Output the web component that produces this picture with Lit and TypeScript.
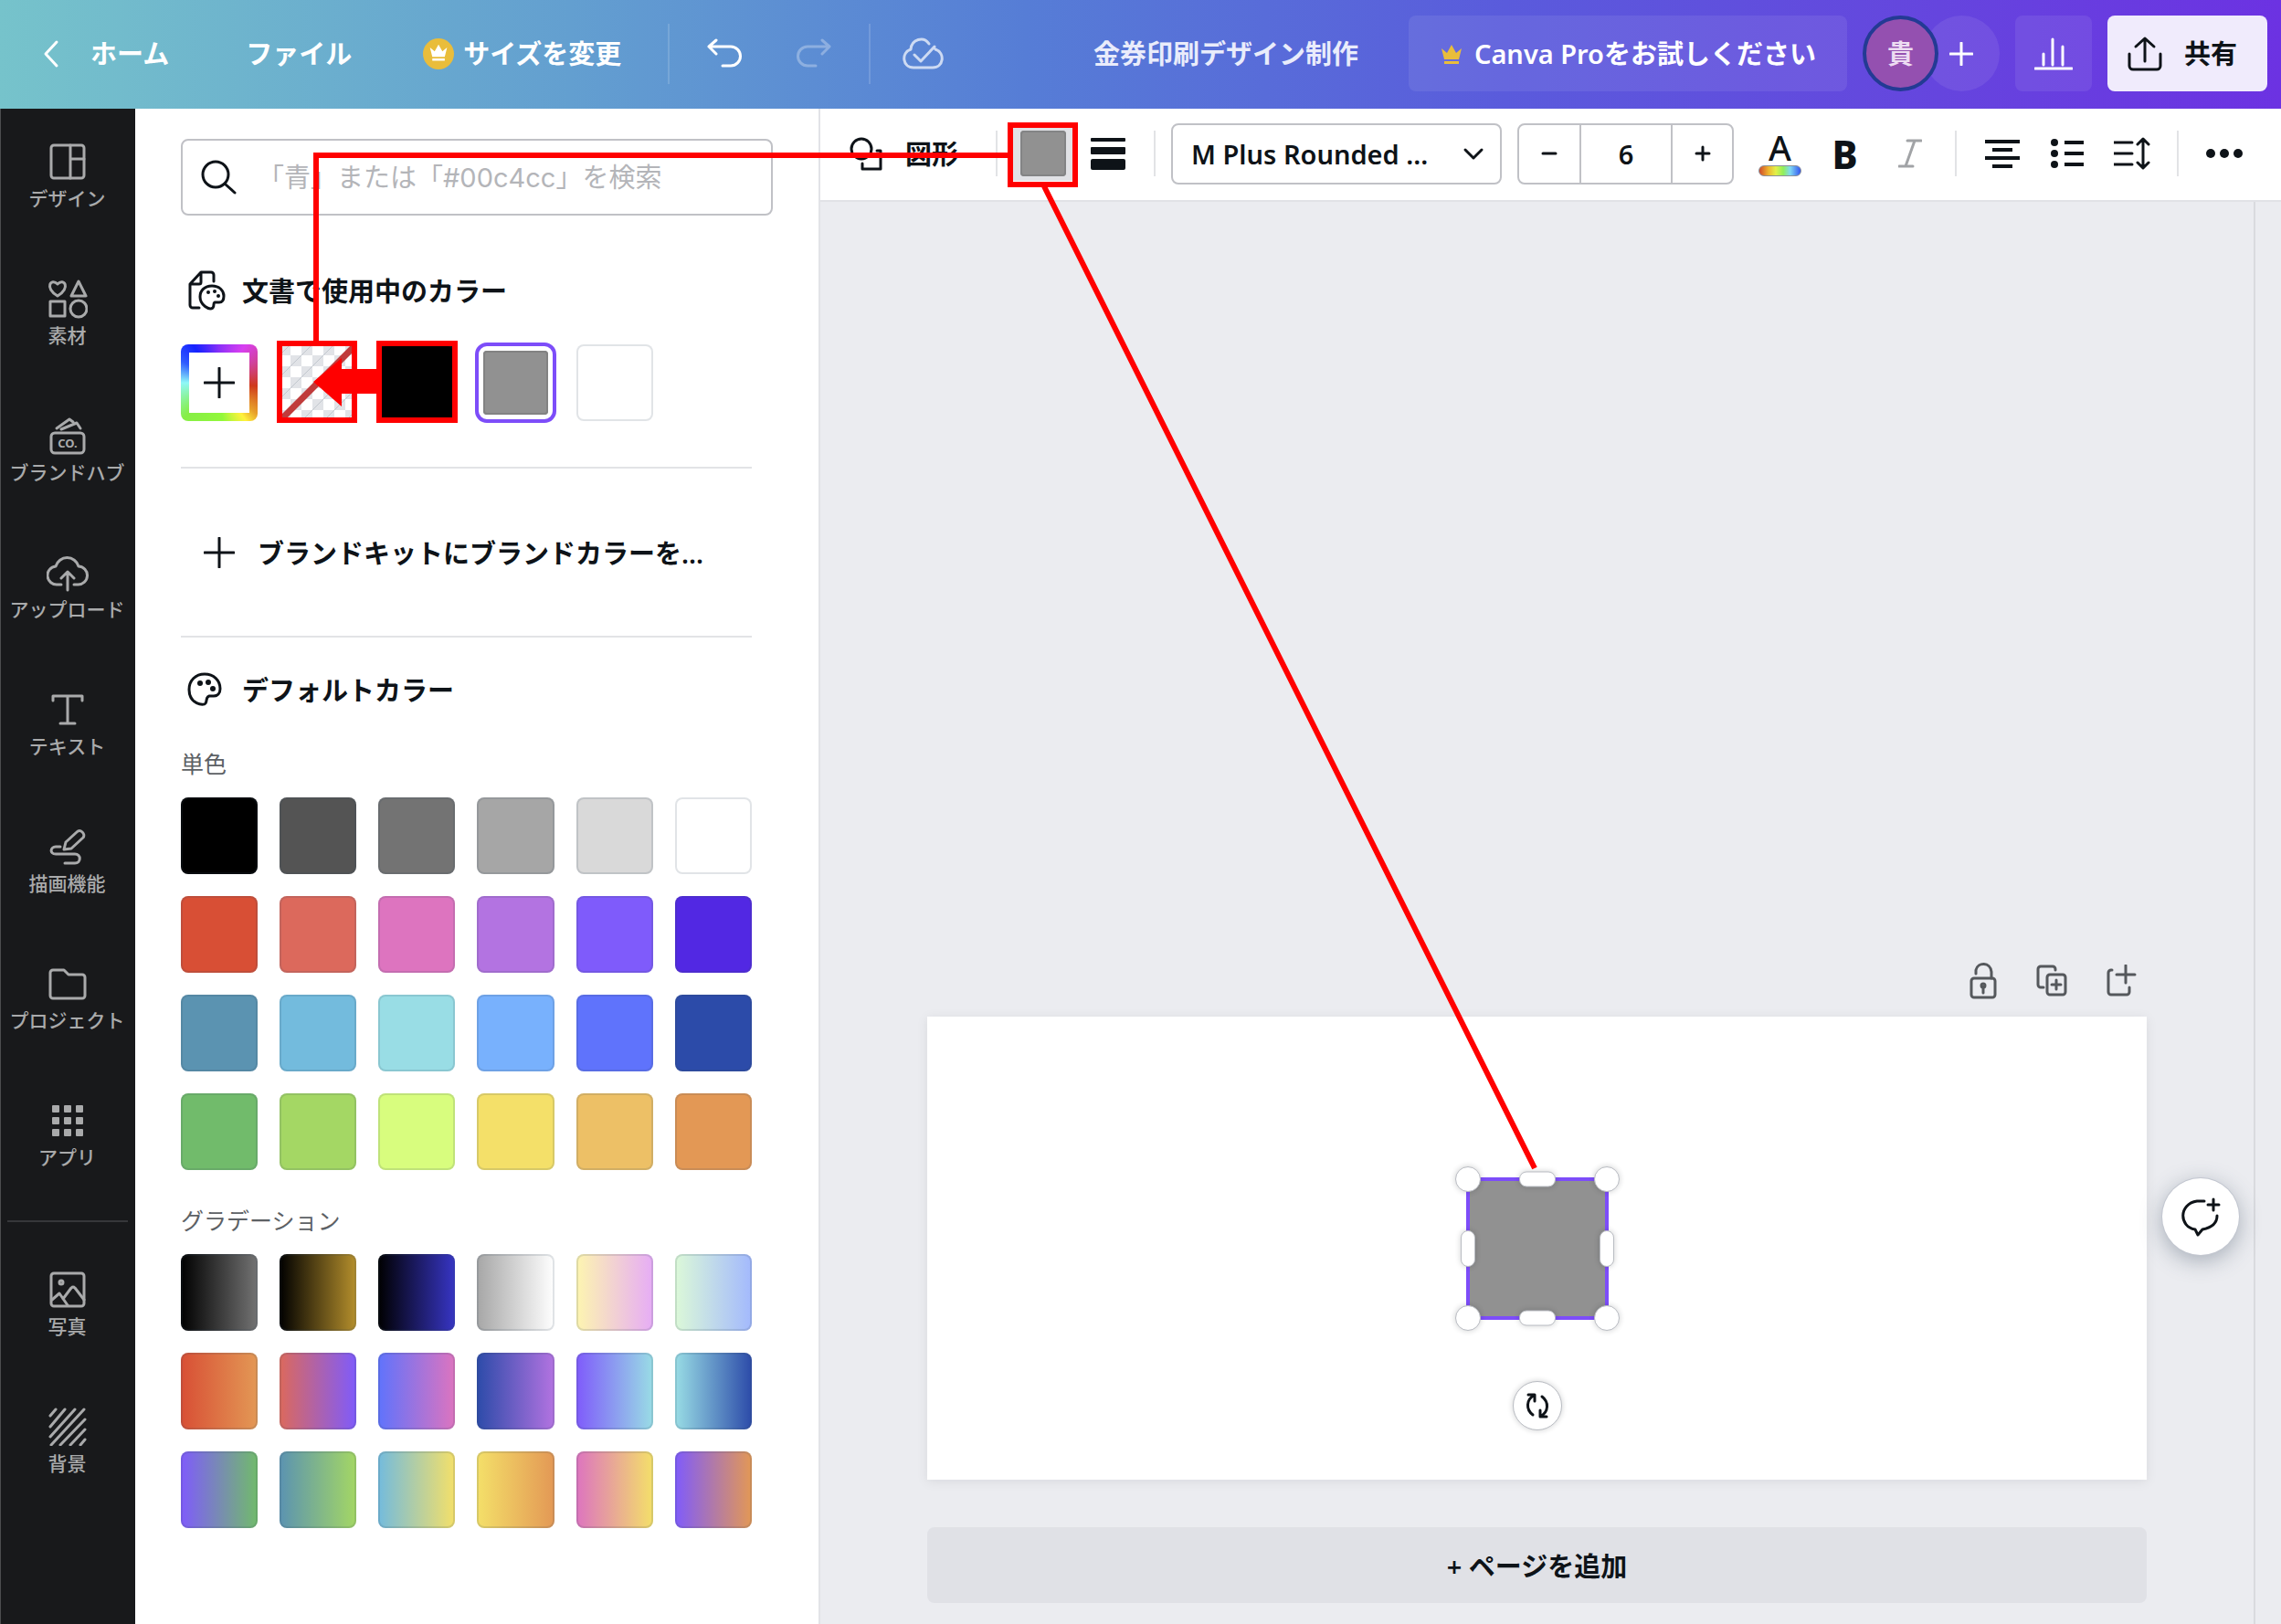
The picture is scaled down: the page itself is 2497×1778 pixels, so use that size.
import { LitElement, html, svg, css, TemplateResult, SVGTemplateResult } from "lit";
import { customElement, state } from "lit/decorators.js";
import { styleMap } from "lit/directives/style-map.js";

const icon = (w: number, h: number, body: SVGTemplateResult, cls = ""): TemplateResult => html`
  <svg class="icon ${cls}" width=${w} height=${h} viewBox="0 0 ${w} ${h}" aria-hidden="true">${body}</svg>`;

const crownPath = "M2 6 L8 11 L13 2 L18 11 L24 6 L21 18 H5 Z M5 20 H21 V23 H5 Z";

const icons = {
  back: icon(20, 32, svg`<path d="M16 3 L4 16 L16 29"/>`),
  crownBadge: icon(34, 34, svg`<circle cx="17" cy="17" r="17" fill="#e9bd3b" stroke="none"/>
    <path transform="translate(6 5) scale(.85)" d=${crownPath} fill="#fff" stroke="none"/>`),
  crown: icon(26, 24, svg`<path d=${crownPath} fill="#e9bd3b" stroke="none"/>`),
  undo: icon(38, 36, svg`<path d="M10 3 L2 10 L10 18 M2 10 H26 a10 10 0 0 1 0 21 H17"/>`),
  redo: icon(38, 36, svg`<path d="M28 3 L36 10 L28 18 M36 10 H12 a10 10 0 0 0 0 21 H21"/>`),
  cloudDone: icon(46, 38, svg`<path d="M29 8 c-6 -9 -19 -5 -20 6 c-11 4 -9 20 3 20 H33 c12 0 14 -16 3 -20 M13 20 L20 27 L35 11"/>`),
  chart: icon(42, 38, svg`<path d="M1 35 H41 M10 31 V19 M20 31 V3 M31 31 V11"/>`),
  share: icon(38, 40, svg`<path d="M2 20 V33 a4 4 0 0 0 4 4 H32 a4 4 0 0 0 4 -4 V20 M19 28 V3 M9 12 L19 3 L29 12"/>`),
  plus: icon(26, 26, svg`<path d="M13 1 V25 M1 13 H25"/>`),
  plusLarge: icon(34, 34, svg`<path d="M17 1 V33 M1 17 H33"/>`),
  search: icon(40, 40, svg`<circle cx="16" cy="17" r="14"/><path d="M27 28 L37 37"/>`),
  docPalette: icon(42, 44, svg`<path d="M29 12 V5 a3 3 0 0 0 -3 -3 H15 L3 15 V38 a3 3 0 0 0 3 3 H13 M15 2 V13 a2 2 0 0 1 -2 2 H3"/>
    <path d="M27 17 c8 0 13 5 13 11 c0 5 -2 7 -5 7 h-5 c-2 1 0 3 -2 6 c-4 3 -14 -3 -14 -12 c0 -7 5 -12 13 -12 Z"/>
    <g class="dots"><circle cx="23" cy="24" r="2"/><circle cx="30" cy="23" r="2"/><circle cx="34" cy="28" r="2"/></g>`),
  palette: icon(42, 40, svg`<path d="M19 3 c10 0 17 7 17 16 c0 5 -3 8 -7 8 h-5 c-4 1 -2 5 -4 8 c-2 3 -18 1 -18 -15 c0 -10 7 -17 17 -17 Z"/>
    <g class="dots"><circle cx="14" cy="13" r="3"/><circle cx="23" cy="12" r="3"/><circle cx="28" cy="19" r="3"/></g>`),
  shapes: icon(36, 38, svg`<circle cx="13" cy="14" r="11"/><path d="M30 16 H34 V36 H14 V30"/>`),
  lines: icon(38, 36, svg`<g class="solid"><rect y="1" width="38" height="4" rx="1"/><rect y="11" width="38" height="8" rx="1"/><rect y="24" width="38" height="12" rx="2"/></g>`),
  italic: icon(26, 32, svg`<path d="M10 2 H25 M1 30 H16 M18 2 L8 30"/>`),
  align: icon(38, 32, svg`<path d="M0 3 H38 M8 12 H30 M0 21 H38 M8 30 H30"/>`),
  list: icon(36, 36, svg`<path d="M15 6 H36 M15 18 H36 M15 30 H36"/><g class="dots"><circle cx="4" cy="6" r="4"/><circle cx="4" cy="18" r="4"/><circle cx="4" cy="30" r="4"/></g>`),
  spacing: icon(40, 36, svg`<path d="M0 6 H20 M0 18 H20 M0 30 H20 M32 3 V33 M26 8 L32 2 L38 8 M26 28 L32 34 L38 28"/>`),
  more: icon(40, 12, svg`<g class="dots"><circle cx="5" cy="6" r="5"/><circle cx="20" cy="6" r="5"/><circle cx="35" cy="6" r="5"/></g>`),
  lock: icon(32, 42, svg`<rect x="3" y="18" width="26" height="21" rx="3"/><path d="M8 13 V9 c2 -9 16 -9 17 2 V18 M16 27 V34"/><circle cx="16" cy="26" r="2"/>`),
  duplicate: icon(34, 36, svg`<path d="M8 25 H5 a3 3 0 0 1 -3 -3 V5 a3 3 0 0 1 3 -3 H18 a3 3 0 0 1 3 3 V6"/><rect x="12" y="11" width="20" height="22" rx="3"/><path d="M22 17 V27 M17 22 H27"/>`),
  addPage: icon(34, 36, svg`<path d="M7 6 H6 a3 3 0 0 0 -3 3 V30 a3 3 0 0 0 3 3 H23 a3 3 0 0 0 3 -3 V25 M22 1 V20 M12 11 H32"/>`),
  comment: icon(46, 44, svg`<path d="M27 5 H19 C-1 8 -1 33 17 36 L20 42 L25 36 C35 34 41 30 41 21"/><path d="M37 3 V15 M31 9 H43"/>`),
  rotate: icon(28, 28, svg`<path d="M9 24 C1 18 2 7 10 3 M4 2 H11 V9 M19 4 C27 10 26 21 18 25 M24 26 H17 V19"/>`),
};

const sideIcons: Record<string, TemplateResult> = {
  design: icon(40, 40, svg`<rect x="2" y="2" width="36" height="36" rx="3"/><path d="M23 2 V38 M23 17 H38"/>`),
  elements: icon(44, 44, svg`<path d="M11 19 C-4 10 4 -1 11 6 C18 -1 26 10 11 19 Z"/><path d="M34 3 L42 19 H26 Z"/><rect x="3" y="25" width="16" height="16"/><circle cx="34" cy="33" r="9"/>`),
  brand: icon(40, 42, svg`<rect x="2" y="18" width="36" height="22" rx="4"/><path d="M8 13 L22 3 L26 6 M13 14 L30 7 L34 13"/><text x="20" y="34" text-anchor="middle" class="co">CO.</text>`),
  upload: icon(46, 42, svg`<path d="M16 34 H12 a10 10 0 0 1 -2 -20 a13 13 0 0 1 25 0 a10 10 0 0 1 -1 20 H30 M23 40 V20 M16 27 L23 20 L30 27"/>`),
  text: icon(36, 36, svg`<path d="M2 8 V3 H34 V8 M18 3 V33 M10 33 H26"/>`),
  draw: icon(40, 40, svg`<path d="M16 23 L18 15 L30 4 c4 -4 10 2 7 6 L24 22 Z M12 20 H7 c-6 0 -7 8 0 8 H28 c7 0 7 10 0 10 H17"/>`),
  folder: icon(42, 36, svg`<path d="M2 6 a3 3 0 0 1 3 -3 H17 L22 8 H37 a3 3 0 0 1 3 3 V31 a3 3 0 0 1 -3 3 H5 a3 3 0 0 1 -3 -3 Z"/>`),
  apps: icon(34, 34, svg`<g class="solid">${[0, 13, 26].map((y) => [0, 13, 26].map((x) => svg`<rect x=${x} y=${y} width="8" height="8" rx="1"/>`))}</g>`),
  photo: icon(40, 40, svg`<rect x="2" y="2" width="36" height="36" rx="3"/><path d="M3 31 L11 24 L20 37 M15 30 L24 18 a3 3 0 0 1 4 0 L38 31"/><circle cx="13" cy="12" r="2"/>`),
  background: icon(42, 42, svg`<path d="M2 9 L8 2 M2 21 L18 2 M2 32 L29 2 M3 41 L39 2 M13 41 L40 13 M24 41 L40 24 M35 41 L40 35"/>`),
};

const sideItems: [string, string][] = [
  ["design", "デザイン"], ["elements", "素材"], ["brand", "ブランドハブ"], ["upload", "アップロード"],
  ["text", "テキスト"], ["draw", "描画機能"], ["folder", "プロジェクト"], ["apps", "アプリ"],
];
const sideExtras: [string, string][] = [["photo", "写真"], ["background", "背景"]];

const solids = [
  "#000000", "#545454", "#737373", "#a6a6a6", "#d9d9d9", "#ffffff",
  "#d84f35", "#dc695c", "#dd74bf", "#b373e1", "#7f5bfb", "#5228e3",
  "#5b93b1", "#73bbdd", "#99dde5", "#78b1fd", "#5f73fc", "#2c4ba9",
  "#71bb6b", "#a4d764", "#d8fd7e", "#f4e069", "#edc066", "#e39855",
];
const gradients: [string, string][] = [
  ["#000000", "#737373"], ["#000000", "#b58f2c"], ["#000000", "#3735c4"],
  ["#a6a6a6", "#ffffff"], ["#fdf5b0", "#e6acf6"], ["#dcf9d8", "#a3b9fd"],
  ["#d84f35", "#e39855"], ["#dc695c", "#7f5bfb"], ["#5f73fc", "#dd74bf"],
  ["#2c4ba9", "#b373e1"], ["#7f5bfb", "#99dde5"], ["#99dde5", "#2c4ba9"],
  ["#7f5bfb", "#71bb6b"], ["#5b93b1", "#a4d764"], ["#73bbdd", "#f4e069"],
  ["#f4e069", "#e39855"], ["#dd74bf", "#f4e069"], ["#7f5bfb", "#e39855"],
];

@customElement("app-root")
export class AppRoot extends LitElement {
  @state() private size = "6";

  static styles = css`
    :host { display: block; font-family: "Noto Sans", "Noto Sans CJK JP", sans-serif; color: #0e1318; }
    * { box-sizing: border-box; }
    button, input, select { font: inherit; color: inherit; margin: 0; padding: 0; border: 0; background: none; }
    button { display: flex; align-items: center; justify-content: center; flex: none; cursor: pointer; white-space: nowrap; }
    h1, h2, h3 { margin: 0; font-size: inherit; font-weight: inherit; }
    .icon { display: block; flex: none; fill: none; stroke: currentColor; stroke-width: 3; stroke-linecap: round; stroke-linejoin: round; }
    .dots, .solid { fill: currentColor; stroke: none; }
    .app { position: relative; min-height: 100vh; display: flex; flex-direction: column; }

    .top { height: 119px; flex: none; display: flex; align-items: center; padding: 0 15px 2px 0; color: #fff; font-size: 29px; font-weight: 600;
      background: linear-gradient(90deg, #76c3cb 0%, #639fd0 25%, #567dd6 45%, #5a5bdc 66%, #6545de 85%, #6c32e2 100%); }
    .top button, .top a { height: 83px; }
    .top span, .title { padding-bottom: 3px; }
    .home { display: flex; align-items: center; gap: 33px; padding: 0 42px 0 46px; color: #fff; text-decoration: none; }
    .top .file { padding: 0 40px 3px 42px; }
    .top .resize { padding: 0 51px 0 38px; gap: 10px; }
    .top .history { padding: 0 30px; }
    .top .history.first { padding-left: 41px; }
    .top .history.last { padding-right: 41px; color: rgba(255, 255, 255, .3); }
    .rule { width: 2px; height: 66px; flex: none; background: rgba(255, 255, 255, .15); }
    .top .cloud { padding-left: 35px; color: rgba(255, 255, 255, .7); }
    .right { display: flex; align-items: center; gap: 17px; margin-left: auto; }
    .title { color: #e9ecfb; margin-right: 38px; white-space: nowrap; }
    .top .tint { background: rgba(255, 255, 255, .08); border-radius: 8px; }
    .top .pro { padding: 0 34px; gap: 12px; }
    .people { display: flex; }
    .top .avatar { width: 83px; border-radius: 50%; border: 4px solid #233a94; background: #9450b0; color: #eddcf2; z-index: 1; padding-bottom: 3px; }
    .top .invite { width: 83px; margin-left: -16px; border-radius: 50%; }
    .top .chart { width: 84px; }
    .top .share { padding: 0 33px 0 22px; gap: 24px; border-radius: 8px; background: #f0ebfc; color: #0e1318; }

    .body { flex: 1; display: flex; align-items: stretch; }
    .side { width: 148px; flex: none; background: #18191b; color: #a9aaab; box-shadow: inset 1px 0 #4c4d4f; padding-right: 1px; font-size: 21px; font-weight: 500; }
    .side button { width: 100%; height: 150px; flex-direction: column; gap: 2px; }
    .side .pic { height: 44px; display: flex; align-items: center; }
    .side .label { line-height: 32px; }
    .side hr { height: 2px; margin: 17px 7px 16px 8px; border: 0; background: #36373a; }
    .co { font: 700 13px "Noto Sans", sans-serif; fill: currentColor; stroke: none; }

    .panel { width: 750px; flex: none; padding: 33px 50px 0; background: #fff; border-right: 2px solid #e2e3e7; }
    .search { height: 84px; display: flex; align-items: center; gap: 22px; padding: 0 20px; border: 2px solid #c0c1c6; border-radius: 8px; }
    .search input { flex: 1; min-width: 0; height: 100%; font-family: Inter, "Noto Sans CJK JP", sans-serif; font-size: 29px; outline: 0; }
    .search input::placeholder { color: #b4b5b9; opacity: 1; }
    .content { padding-right: 23px; }
    .heading { display: flex; align-items: center; gap: 18px; height: 44px; padding-left: 7px; font-size: 29px; font-weight: 600; }
    .heading span, .brandkit span { padding-bottom: 2px; }
    .heading.doc { margin: 60px 0 37px; }
    .heading.default { margin: 35px 0 41px; }
    .grid { display: grid; grid-template-columns: repeat(6, 1fr); gap: 24px; }
    .swatch { height: 84px; border-radius: 8px; box-shadow: inset 0 0 0 2px rgba(57, 76, 96, .15); overflow: hidden; }
    .grid .custom { background: conic-gradient(#8a30f8 0deg, #d83ff0 35deg, #d0429a 60deg, #cf3a1c 95deg, #e8a02c 130deg, #fff23c 145deg, #92f83a 175deg, #86ee45 225deg, #8ff8f8 270deg, #2f5cff 300deg, #1522ff 325deg, #8a30f8 360deg); padding: 9px; box-shadow: none; }
    .custom span { flex: 1; height: 100%; display: flex; align-items: center; justify-content: center; background: #fff; }
    .selected { background: #919191; box-shadow: inset 0 0 0 2px #828282; border-radius: 4px; margin: 7px; height: 70px; outline: 4px solid #7d4df9; outline-offset: 5px; }
    .content hr { height: 2px; margin: 0; border: 0; background: #e2e3e6; }
    .content .after { margin-top: 50px; }
    .brandkit { width: 100%; height: 183px; justify-content: flex-start; padding-left: 25px; gap: 25px; font-size: 29px; font-weight: 600; }
    .sub { font-size: 25px; line-height: 36px; color: #5d6165; margin: 0 0 19px; }
    .grid + .sub { margin-top: 37px; }

    .main { flex: 1; min-width: 0; display: flex; flex-direction: column; background: #ebecf0; }
    .tools { height: 102px; flex: none; display: flex; align-items: center; padding: 0 26px 2px 32px; background: #fff; border-bottom: 2px solid #e1e2e6; }
    .shape { gap: 25px; margin-right: 41px; font-size: 29px; font-weight: 600; }
    .shape span { padding-bottom: 2px; }
    .vr { width: 2px; height: 50px; flex: none; background: #e2e3e6; margin: 0 14px; }
    .vr.flush { margin: 0 17px 0 0; }
    .fill { width: 65px; height: 60px; background: #e1e2e6; margin-right: 20px; }
    .fill span { width: 50px; height: 50px; border-radius: 4px; background: #919191; box-shadow: inset 0 0 0 2px #838485; }
    .stroke { margin-right: 31px; }
    .font { position: relative; width: 362px; height: 67px; flex: none; margin-right: 17px; }
    .font select { width: 100%; height: 100%; padding: 0 60px 0 20px; border: 2px solid #c0c1c6; border-radius: 8px; appearance: none; font-size: 29px; font-weight: 600; background: #fff; }
    .font .icon { position: absolute; right: 19px; top: 26px; pointer-events: none; }
    .size { width: 237px; height: 67px; flex: none; display: grid; grid-template-columns: 66px 1fr 65px; border: 2px solid #c0c1c6; border-radius: 8px; margin-right: 15px; font-weight: 600; }
    .size button { height: 100%; }
    .size input { width: 100%; height: 100%; text-align: center; font-size: 29px; border: solid #c0c1c6; border-width: 0 2px; }
    .tool { width: 71px; height: 67px; }
    .letter { flex-direction: column; font-size: 38px; line-height: 36px; font-weight: 500; gap: 2px; }
    .rainbow { width: 47px; height: 12px; border-radius: 6px; border: 1px solid #8a9099; background: linear-gradient(90deg, #d04a2a, #eeb52f 22%, #e2f04a 40%, #90ef5a 58%, #7fd8f4 75%, #3355f0); }
    .bold { font-size: 42px; font-weight: 800; }
    .dim { color: #a1a3a6; }
    .straight .icon { stroke-linecap: butt; stroke-width: 4; }

    .work { flex: 1; display: flex; }
    .stage { flex: 1; display: flex; flex-direction: column; justify-content: flex-end; padding: 0 117px 23px; position: relative; border-right: 2px solid #d9dade; }
    .gutter { width: 28px; flex: none; }
    .pagebar { display: flex; justify-content: flex-end; gap: 42px; padding-right: 11px; height: 42px; align-items: center; margin-bottom: 18px; color: #55585c; }
    .page { height: 507px; background: #fff; display: flex; align-items: center; justify-content: center; box-shadow: 0 2px 12px rgba(14, 19, 24, .08); }
    .object { position: relative; width: 156px; height: 156px; background: #919191; border: 4px solid #7d4df9; }
    .handle { position: absolute; background: #fff; border: 1px solid #b9bcc2; box-shadow: 0 0 6px rgba(14, 19, 24, .2); transform: translate(-50%, -50%); }
    .corner { width: 28px; height: 28px; border-radius: 50%; }
    .wide { width: 40px; height: 17px; border-radius: 8px; }
    .tall { width: 16px; height: 40px; border-radius: 8px; }
    .l { left: -2px; } .c { left: 50%; } .r { left: calc(100% + 2px); }
    .t { top: -2px; } .m { top: 50%; } .b { top: calc(100% + 2px); }
    .spin { top: 246px; width: 54px; height: 54px; border-radius: 50%; }
    .addpage { height: 83px; margin-top: 52px; padding-bottom: 2px; border-radius: 8px; background: #e0e1e6; font-size: 29px; font-weight: 600; }
    .fab { position: absolute; right: 16px; bottom: 404px; width: 84px; height: 84px; border-radius: 50%; background: #fff; box-shadow: 0 0 0 1px #c3c7d0, 0 6px 24px rgba(57, 76, 96, .4); }
    .guide { position: absolute; left: 0; top: 0; width: 100%; height: 100%; pointer-events: none; fill: none; stroke: #f00; stroke-width: 6; }
    .guide .arrow { fill: #f00; stroke: none; }
  `;

  private sideButton([key, label]: [string, string]) {
    return html`<button><span class="pic">${sideIcons[key]}</span><span class="label">${label}</span></button>`;
  }

  private swatch(background: string) {
    return html`<button class="swatch" aria-label=${background} style=${styleMap({ background })}></button>`;
  }

  private transparentSwatch() {
    const cells: SVGTemplateResult[] = [];
    for (let r = 0; r < 7; r++)
      for (let c = r % 2; c < 7; c += 2)
        cells.push(svg`<rect x=${c * 12} y=${r * 12} width="12" height="12" fill="#e1e3e7" stroke="none"/><path d="M${c * 12} ${r * 12 + 12} l12 -12" stroke="#c3c8cf" stroke-width="1"/>`);
    return html`<button class="swatch" aria-label="透明">${icon(84, 84, svg`${cells}<path d="M0 84 L84 0" stroke="#c03b3b" stroke-width="7"/>`)}</button>`;
  }

  private step(by: number) {
    this.size = String(Math.max(1, Number(this.size) + by));
  }

  render() {
    return html`
      <div class="app">
        <header class="top">
          <a class="home" href="#">${icons.back}<span>ホーム</span></a>
          <button class="file">ファイル</button>
          <button class="resize">${icons.crownBadge}<span>サイズを変更</span></button>
          <i class="rule"></i>
          <button class="history first" aria-label="元に戻す">${icons.undo}</button>
          <button class="history last" aria-label="やり直す">${icons.redo}</button>
          <i class="rule"></i>
          <button class="cloud" aria-label="保存済み">${icons.cloudDone}</button>
          <div class="right">
            <h1 class="title">金券印刷デザイン制作</h1>
            <button class="pro tint">${icons.crown}<span>Canva Proをお試しください</span></button>
            <div class="people">
              <button class="avatar">貴</button>
              <button class="invite tint" aria-label="メンバーを追加">${icons.plus}</button>
            </div>
            <button class="chart tint" aria-label="インサイト">${icons.chart}</button>
            <button class="share">${icons.share}<span>共有</span></button>
          </div>
        </header>

        <div class="body">
          <nav class="side">
            ${sideItems.map((i) => this.sideButton(i))}
            <hr />
            ${sideExtras.map((i) => this.sideButton(i))}
          </nav>

          <aside class="panel">
            <label class="search">${icons.search}<input type="search" aria-label="カラーを検索" placeholder="「青」または「#00c4cc」を検索" /></label>
            <div class="content">
              <h2 class="heading doc">${icons.docPalette}<span>文書で使用中のカラー</span></h2>
              <div class="grid">
                <button class="swatch custom" aria-label="新しいカラーを追加"><span>${icons.plusLarge}</span></button>
                ${this.transparentSwatch()}
                ${this.swatch("#000000")}
                <button class="selected" aria-label="#919191"></button>
                ${this.swatch("#ffffff")}
              </div>
              <hr class="after" />
              <button class="brandkit">${icons.plusLarge}<span>ブランドキットにブランドカラーを...</span></button>
              <hr />
              <h2 class="heading default">${icons.palette}<span>デフォルトカラー</span></h2>
              <h3 class="sub">単色</h3>
              <div class="grid">${solids.map((c) => this.swatch(c))}</div>
              <h3 class="sub">グラデーション</h3>
              <div class="grid">${gradients.map(([a, b]) => this.swatch(`linear-gradient(90deg, ${a}, ${b})`))}</div>
            </div>
          </aside>

          <main class="main">
            <div class="tools">
              <button class="shape">${icons.shapes}<span>図形</span></button>
              <span class="vr flush"></span>
              <button class="fill" aria-label="カラー"><span></span></button>
              <button class="stroke" aria-label="線のスタイル">${icons.lines}</button>
              <span class="vr flush"></span>
              <div class="font">
                <select aria-label="フォント"><option>M Plus Rounded ...</option></select>
                ${icon(24, 16, svg`<path d="M3 3 L12 12 L21 3"/>`)}
              </div>
              <div class="size">
                <button aria-label="小さく" @click=${() => this.step(-1)}>${icon(18, 18, svg`<path d="M2 9 H16"/>`)}</button>
                <input aria-label="フォントサイズ" .value=${this.size} @change=${(e: Event) => (this.size = (e.target as HTMLInputElement).value)} />
                <button aria-label="大きく" @click=${() => this.step(1)}>${icon(18, 18, svg`<path d="M2 9 H16 M9 2 V16"/>`)}</button>
              </div>
              <button class="tool letter" aria-label="テキストの色"><span>A</span><span class="rainbow"></span></button>
              <button class="tool bold">B</button>
              <button class="tool dim" aria-label="斜体">${icons.italic}</button>
              <span class="vr"></span>
              <button class="tool straight" aria-label="配置">${icons.align}</button>
              <button class="tool straight" aria-label="リスト">${icons.list}</button>
              <button class="tool" aria-label="スペース">${icons.spacing}</button>
              <span class="vr"></span>
              <button class="tool" aria-label="もっと見る">${icons.more}</button>
            </div>
            <div class="work">
              <div class="stage">
                <div class="pagebar">
                  <button aria-label="ロック">${icons.lock}</button>
                  <button aria-label="ページを複製">${icons.duplicate}</button>
                  <button aria-label="ページを挿入">${icons.addPage}</button>
                </div>
                <div class="page">
                  <div class="object">
                    ${["l t", "r t", "l b", "r b"].map((p) => html`<span class="handle corner ${p}"></span>`)}
                    ${["c t", "c b"].map((p) => html`<span class="handle wide ${p}"></span>`)}
                    ${["l m", "r m"].map((p) => html`<span class="handle tall ${p}"></span>`)}
                    <button class="handle spin c" aria-label="回転">${icons.rotate}</button>
                  </div>
                </div>
                <button class="addpage">+ ページを追加</button>
                <button class="fab" aria-label="コメントを追加">${icons.comment}</button>
              </div>
              <div class="gutter"></div>
            </div>
          </main>
        </div>

        <svg class="guide" aria-hidden="true">
          <path d="M1103 170 H346 V374 M1143 204 L1680 1279"/>
          <rect x="1106" y="137" width="71" height="65"/>
          <rect x="306" y="376" width="82" height="84"/>
          <rect x="415" y="376" width="83" height="84"/>
          <path class="arrow" d="M343 418 L374 392 V404 H418 V431 H374 V445 Z"/>
        </svg>
      </div>
    `;
  }
}
